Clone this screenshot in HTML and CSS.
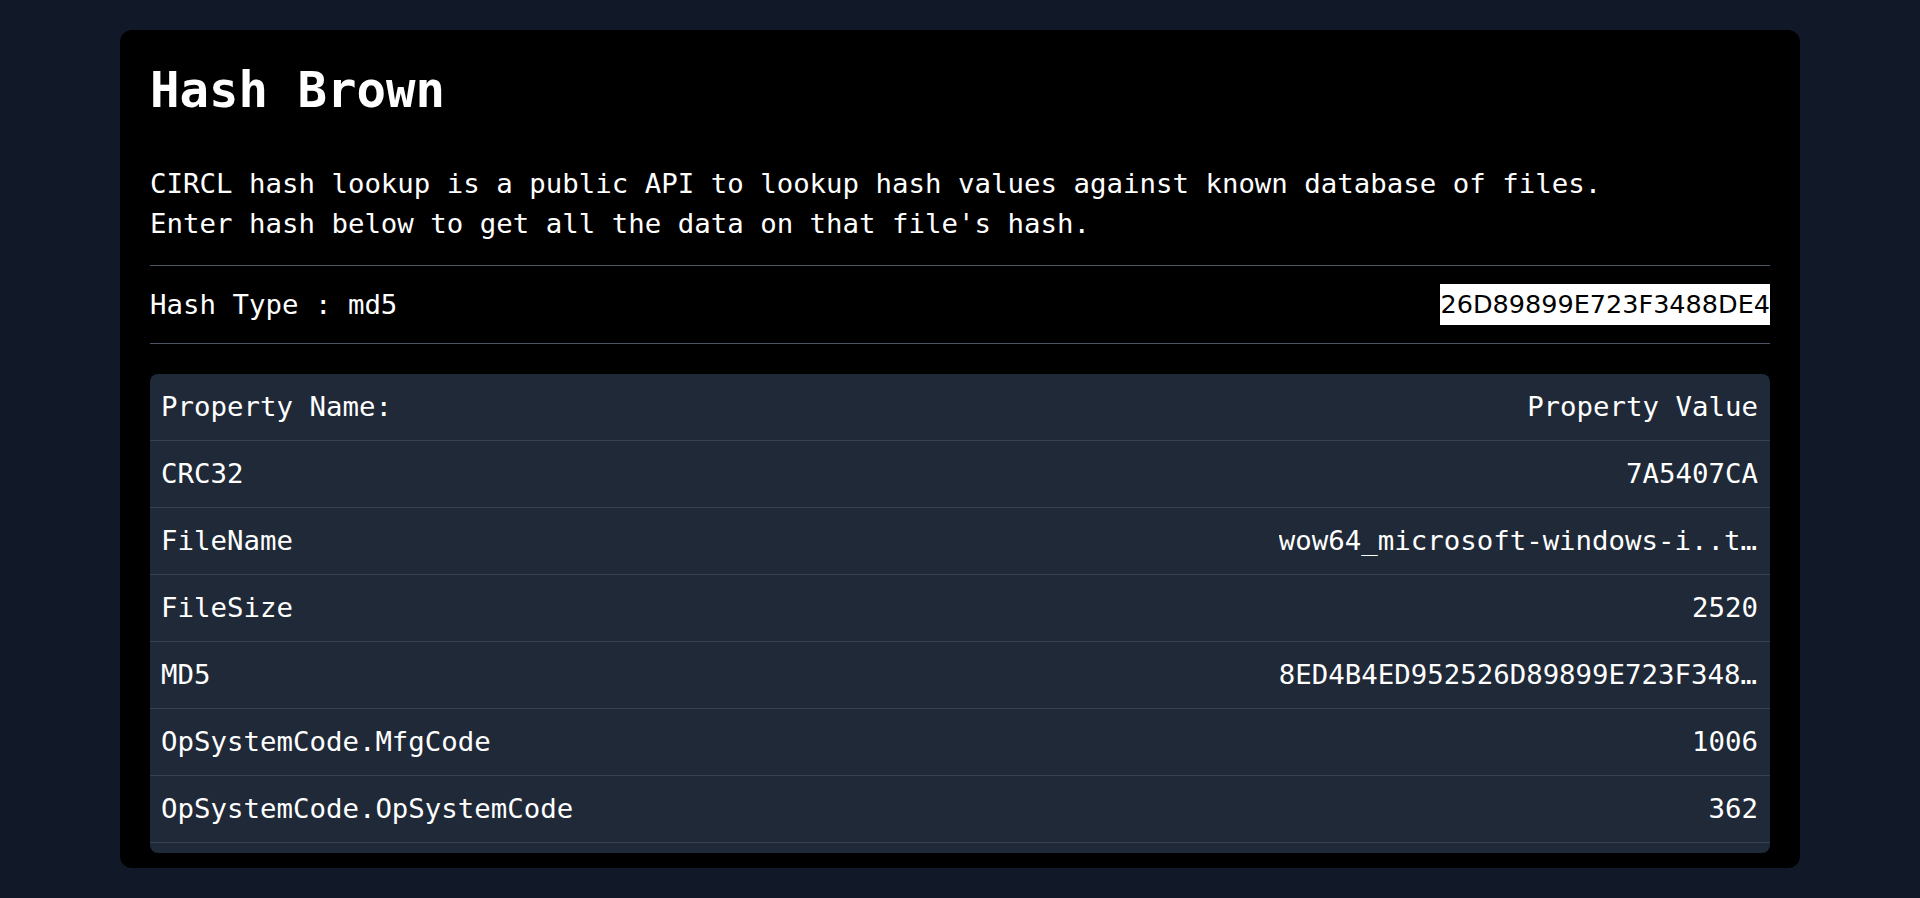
FILE: index.html
```html
<!DOCTYPE html>
<html lang="en">
<head>
<meta charset="utf-8">
<title>Hash Brown</title>
<link rel="stylesheet" href="styles.css">
</head>
<body>
<main class="card">
  <h1 class="title">Hash Brown</h1>
  <p class="desc">CIRCL hash lookup is a public API to lookup hash values against known database of files.<br>Enter hash below to get all the data on that file's hash.</p>
  <section class="hash-bar">
    <span class="hash-type">Hash Type : md5</span>
    <div class="hash-input"><span>8ED4B4ED952526D89899E723F3488DE4</span></div>
  </section>
  <div class="table-wrap">
    <div class="row">
      <span class="name">Property Name:</span>
      <span class="value">Property Value</span>
    </div>
    <div class="row">
      <span class="name">CRC32</span>
      <span class="value">7A5407CA</span>
    </div>
    <div class="row">
      <span class="name">FileName</span>
      <span class="value">wow64_microsoft-windows-i..tocolimplementation_31bf3856ad364e35_6.1.7600.16385_none_manifest</span>
    </div>
    <div class="row">
      <span class="name">FileSize</span>
      <span class="value">2520</span>
    </div>
    <div class="row">
      <span class="name">MD5</span>
      <span class="value">8ED4B4ED952526D89899E723F3488DE4</span>
    </div>
    <div class="row">
      <span class="name">OpSystemCode.MfgCode</span>
      <span class="value">1006</span>
    </div>
    <div class="row">
      <span class="name">OpSystemCode.OpSystemCode</span>
      <span class="value">362</span>
    </div>
    <div class="row">
      <span class="name">OpSystemCode.OpSystemName</span>
      <span class="value">Windows 7</span>
    </div>
    <div class="row">
      <span class="name">OpSystemCode.OpSystemVersion</span>
      <span class="value">none</span>
    </div>
    <div class="row">
      <span class="name">ProductCode.ApplicationType</span>
      <span class="value">Operating System</span>
    </div>
    <div class="row">
      <span class="name">SHA-1</span>
      <span class="value">00000079FD7AAC9B2F9C988C50750E1F50B27EB5</span>
    </div>
  </div>
</main>
</body>
</html>
```

FILE: styles.css
```css
* {
  box-sizing: border-box;
}

html, body {
  margin: 0;
  padding: 0;
  background: #111827;
}

body {
  font-family: "DejaVu Sans Mono", "Liberation Mono", monospace;
  color: #ffffff;
  height: 100vh;
  padding: 30px 120px;
}

.card {
  background: #000000;
  border-radius: 12px;
  height: 100%;
  padding: 30px 30px 15px;
  display: flex;
  flex-direction: column;
}

.title {
  margin: 3px 0 0;
  font-size: 49px;
  line-height: 56px;
  font-weight: 700;
}

.desc {
  margin: 45px 0 0;
  font-size: 27.4px;
  line-height: 40px;
}

.hash-bar {
  margin-top: 21px;
  border-top: 1px solid #4b5563;
  border-bottom: 1px solid #4b5563;
  padding: 18px 0;
  display: flex;
  align-items: center;
  justify-content: space-between;
  font-size: 27.4px;
  line-height: 40px;
}

.hash-input {
  width: 330px;
  height: 41px;
  background: #ffffff;
  color: #000000;
  font-family: "DejaVu Sans", "Liberation Sans", sans-serif;
  font-size: 25.5px;
  line-height: 41px;
  display: flex;
  justify-content: flex-end;
  overflow: hidden;
  white-space: nowrap;
}

.table-wrap {
  margin-top: 30px;
  flex: 1;
  min-height: 0;
  overflow: hidden;
  background: #1f2937;
  border-radius: 8px;
}

.row {
  display: flex;
  justify-content: space-between;
  align-items: center;
  gap: 24px;
  padding: 13px 12px 13px 11px;
  border-bottom: 1px solid #374151;
  font-size: 27.4px;
  line-height: 40px;
  white-space: nowrap;
}

.value {
  max-width: calc(29ch + 1px);
  overflow: hidden;
  text-overflow: ellipsis;
  text-align: right;
}
```
